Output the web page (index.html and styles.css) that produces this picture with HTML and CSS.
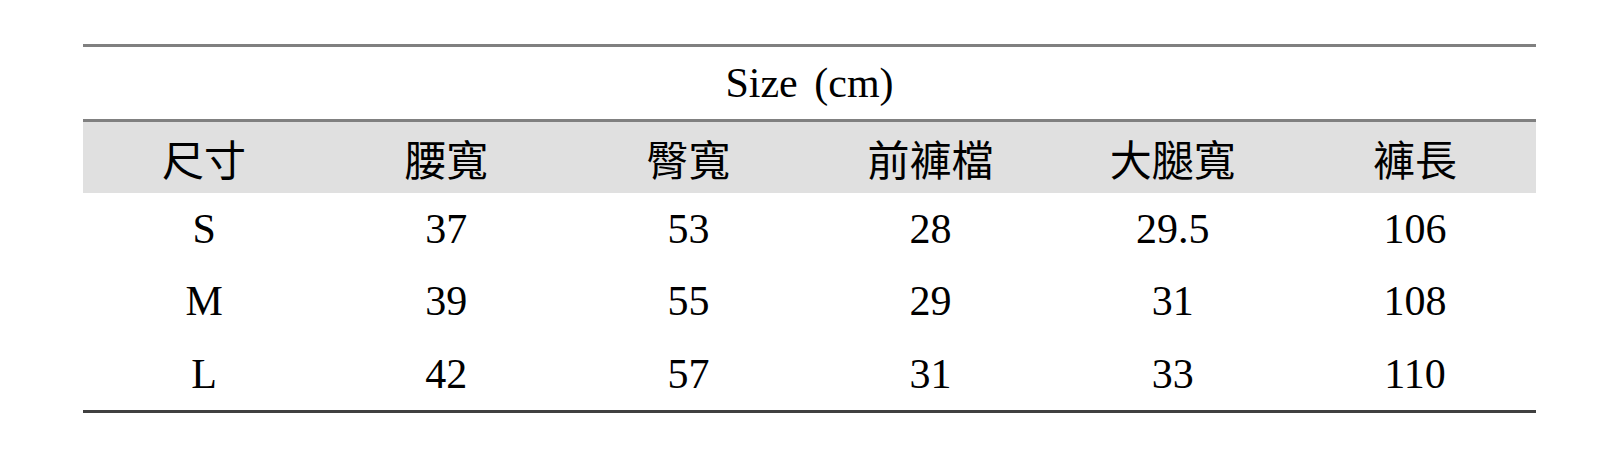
FILE: index.html
```html
<!DOCTYPE html>
<html lang="zh-Hant">
<head>
<meta charset="utf-8">
<title>Size (cm)</title>
<link rel="stylesheet" href="styles.css">
</head>
<body>
<div class="sheet">
  <div class="title">Size (cm)</div>
  <div class="row head">
    <div>尺寸</div><div>腰寬</div><div>臀寬</div><div>前褲檔</div><div>大腿寬</div><div>褲長</div>
  </div>
  <div class="row">
    <div>S</div><div>37</div><div>53</div><div>28</div><div>29.5</div><div>106</div>
  </div>
  <div class="row">
    <div>M</div><div>39</div><div>55</div><div>29</div><div>31</div><div>108</div>
  </div>
  <div class="row last">
    <div>L</div><div>42</div><div>57</div><div>31</div><div>33</div><div>110</div>
  </div>
</div>
</body>
</html>
```

FILE: styles.css
```css
html, body {
  margin: 0;
  padding: 0;
  background: #ffffff;
}

body {
  font-family: "Liberation Serif", "Noto Sans CJK TC", serif;
  font-size: 42px;
  color: #000000;
}

.sheet {
  margin: 44px 0 0 83px;
  width: 1453px;
  border-top: 3px solid #808080;
  border-bottom: 3px solid #404040;
}

.title {
  height: 72px;
  display: flex;
  align-items: center;
  justify-content: center;
  border-bottom: 3px solid #808080;
  word-spacing: 6px;
}

.row {
  display: grid;
  grid-template-columns: repeat(6, 1fr);
  height: 72px;
  align-items: center;
  text-align: center;
}

.row.head {
  height: 71px;
  background: #e0e0e0;
}

.row.last {
  height: 73px;
}
```
